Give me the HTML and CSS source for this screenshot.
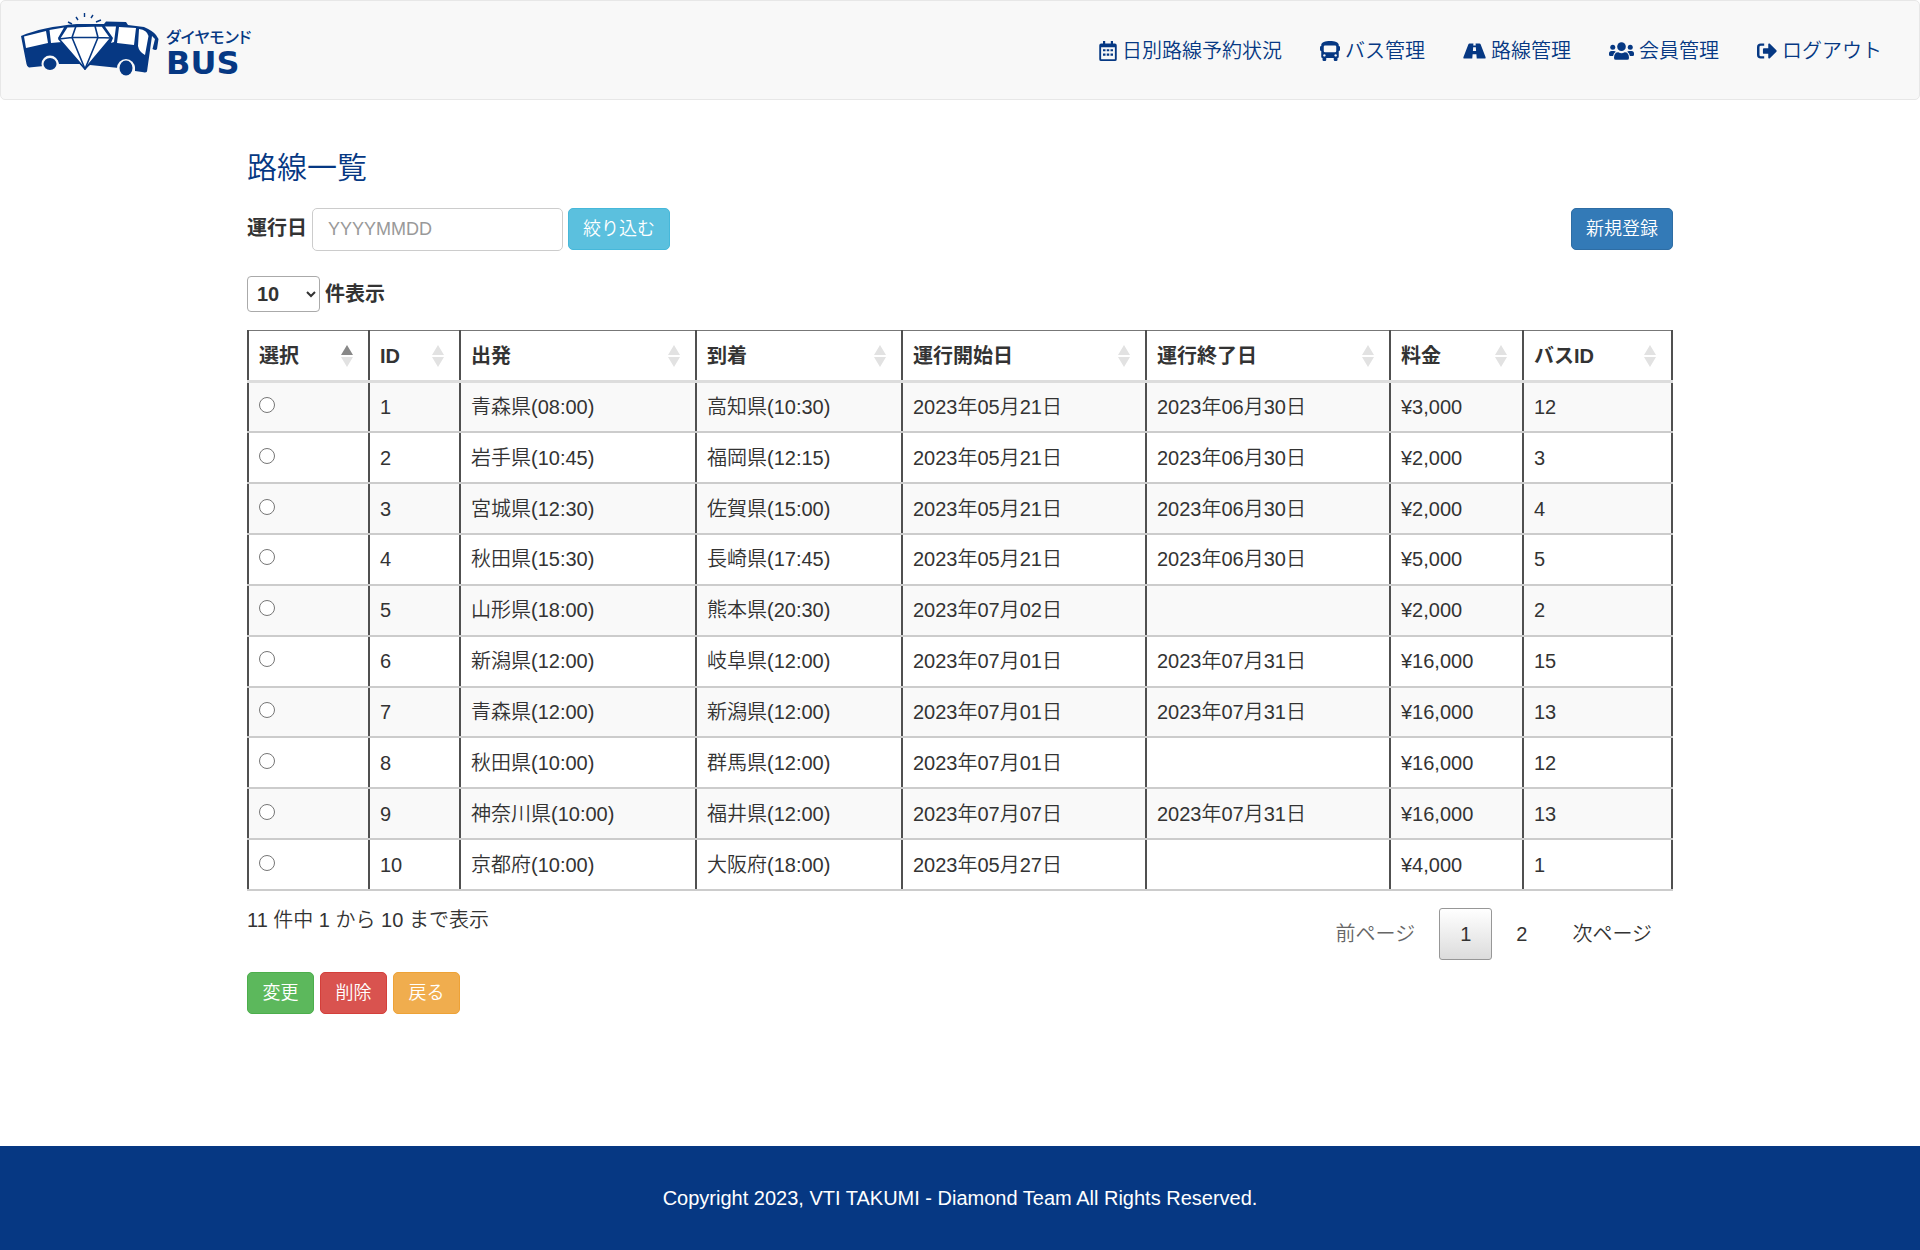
FILE: index.html
```
<!DOCTYPE html>
<html lang="ja">
<head>
<meta charset="utf-8">
<title>路線一覧</title>
<link rel="stylesheet" href="styles.css">
</head>
<body>
<header class="navbar">
  <a class="brand" href="#" aria-label="ダイヤモンドBUS">
    <svg class="brand-bus" viewBox="0 0 140 66" aria-hidden="true">
      <path fill="#063883" d="M1 24Q22 15 57 12L84 12L86 9.500L106 10L108 13L124 15Q133 19 136 23L138.500 27L137 37Q136 39 132.500 37L135 27L132 24L127 59.500Q126 61 122 60L115 59A8 8 0 0 0 99 56L70 53L65 57L60 52L39 52A7 7 0 0 0 24 54L9 55.500Q7 55 6.500 52Z"/>
      <path fill="#fff" d="M4 24.500L26 19L28 31L6 36ZM29.500 18L44 15.500L38 26L42 30L31 31ZM99 15L116 16L114 33L97 31ZM119 17Q127 18 128.500 24L125 43Q119 40 118 34ZM85 14.500L96 14.500L94 30L91 31L93 26Z"/>
      <path fill="#fff" stroke="#063883" stroke-width="1.800" stroke-linejoin="round" d="M47 14.500L82 13.500L91 26L65 57L39 27Z"/>
      <path fill="none" stroke="#063883" stroke-width="1.600" stroke-linejoin="round" d="M39 27L52 25.500L78 25.500L91 26M56 14L52 25.500L65 57L78 25.500L75 14"/>
      <circle cx="30" cy="52" r="8.500" fill="#f8f8f8"/><ellipse cx="30" cy="52" rx="6.500" ry="6" fill="#063883"/>
      <circle cx="106" cy="56" r="9" fill="#f8f8f8"/><ellipse cx="106" cy="56" rx="6.500" ry="7.500" fill="#063883"/>
      <path stroke="#063883" stroke-width="1.400" fill="none" d="M48 10l4 2M56 5l2 3M64.500 1v4M73 3l-2 3M81 8l-5 2"/>
    </svg>
    <span class="brand-text" aria-hidden="true"><span class="brand-kana">ダイヤモンド</span><span class="brand-name">BUS</span></span>
  </a>
  <nav class="menu">
    <a href="#"><svg viewBox="0 0 448 512" width="18" height="20"><path fill-rule="evenodd" d="M96 0h56v64h144V0h56v64h48q48 0 48 48v352q0 48-48 48H48q-48 0-48-48V112q0-48 48-48h48zM48 160v304h352V160zM96 208h64v56H96zm96 0h64v56h-64zm96 0h64v56h-64zM96 320h64v56H96zm96 0h64v56h-64zm96 0h64v56h-64z"/></svg>日別路線予約状況</a>
    <a href="#"><svg viewBox="0 0 512 512" width="20" height="20"><path fill-rule="evenodd" d="M256 0c120 0 224 36 224 96v32q32 0 32 32v64q0 32-32 32v144q0 32-32 32v48q0 32-32 32h-32q-32 0-32-32v-48H160v48q0 32-32 32H96q-32 0-32-32v-48q-32 0-32-32V256q-32 0-32-32v-64q0-32 32-32V96C32 36 136 0 256 0zM128 112q-32 0-32 32v112q0 32 32 32h256q32 0 32-32V144q0-32-32-32zM112 336a32 32 0 1 0 1 0zM400 336a32 32 0 1 0 1 0z"/></svg>バス管理</a>
    <a href="#"><svg viewBox="0 0 576 512" width="23" height="20"><path fill-rule="evenodd" d="M160 64h100l-4 48h64l-4-48h100q20 0 28 20l126 324q14 40-24 40H345l-9-112h-96l-9 112H30q-38 0-24-40L132 84q8-20 28-20zM254 160l-7 96h82l-7-96z"/></svg>路線管理</a>
    <a href="#"><svg viewBox="0 0 640 512" width="25" height="20"><circle cx="320" cy="144" r="110"/><circle cx="96" cy="160" r="64"/><circle cx="544" cy="160" r="64"/><path d="M128 432q0-144 110-144c60 30 104 30 164 0q110 0 110 144 0 48-48 48H176q-48 0-48-48zM0 320q0-64 64-64h64q28 0 46 20-58 30-70 108H32q-32 0-32-32zM640 320q0-64-64-64h-64q-28 0-46 20 58 30 70 108h72q32 0 32-32z"/></svg>会員管理</a>
    <a href="#"><svg viewBox="0 0 512 512" width="20" height="20"><path d="M184 64v56H96q-32 0-32 32v208q0 32 32 32h88v56H96q-96 0-96-96V160q0-96 96-96zM497 273L329 441c-15 15-41 5-41-17v-96H176q-24 0-24-24v-96q0-24 24-24h112V88c0-21 26-32 41-17l168 168q14 17 0 34z"/></svg>ログアウト</a>
  </nav>
</header>
<main class="container">
  <h1>路線一覧</h1>
  <div class="toolbar">
    <form class="filter">
      <label for="date">運行日</label>
      <input class="field" id="date" type="text" placeholder="YYYYMMDD">
      <button class="btn info" type="button">絞り込む</button>
    </form>
    <button class="btn primary" type="button">新規登録</button>
  </div>
  <label class="length"><select><option>10</option><option>25</option><option>50</option></select> 件表示</label>
  <table class="routes">
    <colgroup><col class="c-pick"><col class="c-id"><col class="c-from"><col class="c-to"><col class="c-date"><col class="c-date"><col class="c-fee"><col class="c-bus"></colgroup>
    <thead><tr><th class="sorted">選択</th><th>ID</th><th>出発</th><th>到着</th><th>運行開始日</th><th>運行終了日</th><th>料金</th><th>バスID</th></tr></thead>
    <tbody>
      <tr><td><input type="radio" name="route" aria-label="1"></td><td>1</td><td>青森県(08:00)</td><td>高知県(10:30)</td><td>2023年05月21日</td><td>2023年06月30日</td><td>¥3,000</td><td>12</td></tr>
      <tr><td><input type="radio" name="route" aria-label="2"></td><td>2</td><td>岩手県(10:45)</td><td>福岡県(12:15)</td><td>2023年05月21日</td><td>2023年06月30日</td><td>¥2,000</td><td>3</td></tr>
      <tr><td><input type="radio" name="route" aria-label="3"></td><td>3</td><td>宮城県(12:30)</td><td>佐賀県(15:00)</td><td>2023年05月21日</td><td>2023年06月30日</td><td>¥2,000</td><td>4</td></tr>
      <tr><td><input type="radio" name="route" aria-label="4"></td><td>4</td><td>秋田県(15:30)</td><td>長崎県(17:45)</td><td>2023年05月21日</td><td>2023年06月30日</td><td>¥5,000</td><td>5</td></tr>
      <tr><td><input type="radio" name="route" aria-label="5"></td><td>5</td><td>山形県(18:00)</td><td>熊本県(20:30)</td><td>2023年07月02日</td><td></td><td>¥2,000</td><td>2</td></tr>
      <tr><td><input type="radio" name="route" aria-label="6"></td><td>6</td><td>新潟県(12:00)</td><td>岐阜県(12:00)</td><td>2023年07月01日</td><td>2023年07月31日</td><td>¥16,000</td><td>15</td></tr>
      <tr><td><input type="radio" name="route" aria-label="7"></td><td>7</td><td>青森県(12:00)</td><td>新潟県(12:00)</td><td>2023年07月01日</td><td>2023年07月31日</td><td>¥16,000</td><td>13</td></tr>
      <tr><td><input type="radio" name="route" aria-label="8"></td><td>8</td><td>秋田県(10:00)</td><td>群馬県(12:00)</td><td>2023年07月01日</td><td></td><td>¥16,000</td><td>12</td></tr>
      <tr><td><input type="radio" name="route" aria-label="9"></td><td>9</td><td>神奈川県(10:00)</td><td>福井県(12:00)</td><td>2023年07月07日</td><td>2023年07月31日</td><td>¥16,000</td><td>13</td></tr>
      <tr><td><input type="radio" name="route" aria-label="10"></td><td>10</td><td>京都府(10:00)</td><td>大阪府(18:00)</td><td>2023年05月27日</td><td></td><td>¥4,000</td><td>1</td></tr>
    </tbody>
  </table>
  <div class="table-foot">
    <p>11 件中 1 から 10 まで表示</p>
    <nav class="pager"><a class="off" href="#">前ページ</a><a class="current" href="#">1</a><a href="#">2</a><a href="#">次ページ</a></nav>
  </div>
  <div class="actions">
    <button class="btn success" type="button">変更</button>
    <button class="btn danger" type="button">削除</button>
    <button class="btn warning" type="button">戻る</button>
  </div>
</main>
<footer class="footer">Copyright 2023, VTI TAKUMI - Diamond Team All Rights Reserved.</footer>
</body>
</html>
```
FILE: styles.css
```
* { box-sizing: border-box; }
body {
  margin: 0;
  min-height: 100vh;
  display: flex;
  flex-direction: column;
  background: #fff;
  color: #333;
  font: 350 20px/28px "Liberation Sans", "Noto Sans CJK JP", sans-serif;
}
a { color: inherit; text-decoration: none; }
.navbar {
  display: flex;
  justify-content: space-between;
  height: 100px;
  padding: 0 37px 0 19px;
  border: 1px solid #e7e7e7;
  border-radius: 5px;
  background: #f8f8f8;
  color: #063883;
}
.brand { display: flex; gap: 6px; padding-top: 11px; }
.brand-bus { width: 140px; height: 66px; }
.brand-text { display: flex; flex-direction: column; padding-top: 14px; }
.brand-kana { font-size: 16px; line-height: 24px; font-weight: 500; font-feature-settings: "palt"; }
.brand-name { font: 700 32px/26px "DejaVu Sans", sans-serif; }
.menu { display: flex; gap: 38px; padding-top: 36px; }
.menu a { display: flex; gap: 5px; align-items: center; height: 28px; }
.menu svg { fill: currentColor; }
.container { width: 100%; max-width: 1426px; margin: 0 auto; flex: 1; padding-top: 48px; }
h1 { margin: 0 0 20px; font-size: 30px; line-height: 40px; font-weight: 350; color: #063883; }
.toolbar, .filter, .table-foot { display: flex; justify-content: space-between; }
.filter { gap: 5px; }
label { font-weight: 700; }
.filter label { line-height: 40px; }
.field {
  width: 251px;
  height: 43px;
  padding: 0 15px;
  border: 1px solid #ccc;
  border-radius: 5px;
  font: 18px "Liberation Sans", sans-serif;
}
.field::placeholder { color: #999; }
.btn {
  height: 42px;
  padding: 0 14px;
  border: 1px solid;
  border-radius: 5px;
  color: #fff;
  font: 350 18px/26px "Liberation Sans", "Noto Sans CJK JP", sans-serif;
}
.info { background: #5bc0de; border-color: #46b8da; }
.primary { background: #337ab7; border-color: #2e6da4; }
.success { background: #5cb85c; border-color: #4cae4c; }
.danger { background: #d9534f; border-color: #d43f3a; }
.warning { background: #f0ad4e; border-color: #eea236; }
.length { display: flex; align-items: center; gap: 5px; margin: 25px 0 18px; height: 36px; }
.length select {
  width: 73px;
  height: 36px;
  padding: 0 5px;
  border: 1px solid #aaa;
  border-radius: 4px;
  background: transparent;
  color: #333;
  font: 700 20px "Liberation Sans", sans-serif;
}
.routes { width: 100%; height: 561px; table-layout: fixed; border-collapse: collapse; border: 1px solid #777; border-width: 1px 2px 2px; }
.c-pick { width: 121px; }
.c-id { width: 91px; }
.c-from { width: 236px; }
.c-to { width: 206px; }
.c-date { width: 244px; }
.c-fee { width: 133px; }
.routes th, .routes td {
  height: 50px;
  padding: 0 10px;
  border-left: 2px solid #505050;
  border-right: 2px solid #505050;
  border-bottom: 2px solid #ccc;
  text-align: left;
}
.routes th {
  height: 51px;
  border-bottom: 3px solid #ddd;
  font-weight: 700;
  background: no-repeat right 15px center / 12px 22px url("data:image/svg+xml,%3Csvg xmlns='http://www.w3.org/2000/svg' viewBox='0 0 12 22'%3E%3Cpath fill='%23e2e2e2' d='M0 10h12L6 0zM0 12h12L6 22z'/%3E%3C/svg%3E");
}
.routes th.sorted {
  background-image: url("data:image/svg+xml,%3Csvg xmlns='http://www.w3.org/2000/svg' viewBox='0 0 12 22'%3E%3Cpath fill='%23888' d='M0 10h12L6 0z'/%3E%3Cpath fill='%23e2e2e2' d='M0 12h12L6 22z'/%3E%3C/svg%3E");
}
.routes tbody tr:nth-child(odd) { background: #f9f9f9; }
.routes input { display: block; width: 16px; height: 16px; margin: 0 0 4px; }
.table-foot p { margin: 15px 0 0; }
.pager { display: flex; gap: 3px; padding-top: 17px; }
.pager a { height: 52px; padding: 0 20px; border: 1px solid transparent; border-radius: 3px; line-height: 50px; }
.pager .off { color: #666; }
.pager .current { border-color: #979797; background: linear-gradient(#fff, #dcdcdc); }
.actions { display: flex; gap: 6px; margin-top: 12px; }
.actions .btn { min-width: 67px; }
.footer { height: 104px; background: #063883; color: #fff; text-align: center; line-height: 104px; }
```
